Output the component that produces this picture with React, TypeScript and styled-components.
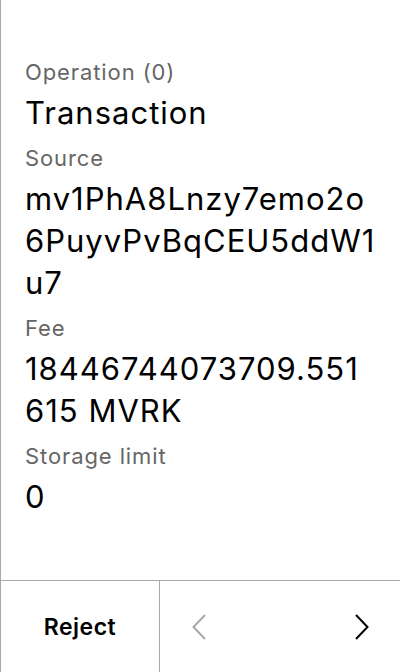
import React from "react";
import styled, { createGlobalStyle } from "styled-components";

const Global = createGlobalStyle`
  html, body { margin: 0; padding: 0; background: #fff; }
  body { font-family: Inter, "Noto Sans", sans-serif; }
  * { box-sizing: border-box; }
`;

const Screen = styled.div`
  width: 400px;
  height: 672px;
  display: flex;
  flex-direction: column;
  border-left: 1px solid #a8a8a8;
  background: #fff;
`;

const Content = styled.div`
  flex: 1;
  display: flex;
  flex-direction: column;
  padding: 57px 24px 0 24px;
`;

const Field = styled.div`
  display: flex;
  flex-direction: column;
  gap: 5px;
  margin-bottom: 9px;
`;

const Label = styled.div`
  font-size: 22px;
  line-height: 30px;
  letter-spacing: 0.9px;
  color: #666;
`;

const Value = styled.div`
  font-size: 31px;
  line-height: 42px;
  letter-spacing: 1px;
  color: #000;
  word-break: break-all;
`;

const Footer = styled.div`
  height: 92px;
  display: grid;
  grid-template-columns: 159px 1fr;
  border-top: 1px solid #a8a8a8;
`;

const RejectButton = styled.button`
  border: none;
  border-right: 1px solid #a8a8a8;
  background: none;
  font-family: Inter, sans-serif;
  font-size: 23px;
  letter-spacing: 0.5px;
  font-weight: 600;
  color: #000;
  padding: 0;
`;

const Nav = styled.div`
  display: flex;
  align-items: center;
  justify-content: space-between;
  padding: 0 31px 0 32px;
`;

const NavButton = styled.button<{ $disabled?: boolean }>`
  border: none;
  background: none;
  padding: 0;
  display: flex;
  color: ${(p) => (p.$disabled ? "#a8a8a8" : "#000")};
`;

const Chevron = ({ dir }: { dir: "left" | "right" }) => (
  <svg width="14" height="26" viewBox="0 0 14 26" fill="none">
    <path
      d={dir === "left" ? "M13 1 L1.5 13 L13 25" : "M1 1 L12.5 13 L1 25"}
      stroke="currentColor"
      strokeWidth="2"
      strokeLinejoin="miter"
    />
  </svg>
);

const fields = [
  { label: "Operation (0)", value: "Transaction" },
  { label: "Source", value: "mv1PhA8Lnzy7emo2o6PuyvPvBqCEU5ddW1u7" },
  { label: "Fee", value: "18446744073709.551615 MVRK" },
  { label: "Storage limit", value: "0" },
];

export default function App() {
  return (
    <>
      <Global />
      <Screen>
        <Content>
          {fields.map((f) => (
            <Field key={f.label}>
              <Label>{f.label}</Label>
              <Value>{f.value}</Value>
            </Field>
          ))}
        </Content>
        <Footer>
          <RejectButton>Reject</RejectButton>
          <Nav>
            <NavButton $disabled>
              <Chevron dir="left" />
            </NavButton>
            <NavButton>
              <Chevron dir="right" />
            </NavButton>
          </Nav>
        </Footer>
      </Screen>
    </>
  );
}
